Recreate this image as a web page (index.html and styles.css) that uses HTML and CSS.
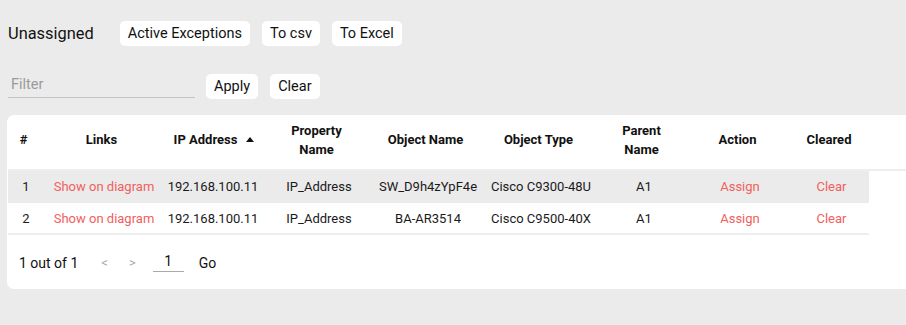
FILE: index.html
```html
<!DOCTYPE html>
<html lang="en">
<head>
<meta charset="utf-8">
<title>Unassigned</title>
<link rel="stylesheet" href="styles.css">
</head>
<body>
<div class="page">
  <div class="toolbar">
    <span class="title">Unassigned</span>
    <button class="btn">Active Exceptions</button>
    <button class="btn">To csv</button>
    <button class="btn">To Excel</button>
  </div>
  <div class="filter-row">
    <input class="filter" type="text" placeholder="Filter">
    <button class="btn">Apply</button>
    <button class="btn">Clear</button>
  </div>
  <div class="card">
    <div class="thead">
      <div class="grid">
        <div class="th">#</div>
        <div class="th">Links</div>
        <div class="th sorted">IP Address <svg class="sort" width="8" height="5" viewBox="0 0 8 5"><path d="M0 5 L4 0 L8 5 Z" fill="#111"/></svg></div>
        <div class="th">Property<br>Name</div>
        <div class="th">Object Name</div>
        <div class="th">Object Type</div>
        <div class="th">Parent<br>Name</div>
        <div class="th">Action</div>
        <div class="th">Cleared</div>
      </div>
    </div>
    <div class="grid row alt">
      <div class="td">1</div>
      <div class="td link">Show on diagram</div>
      <div class="td">192.168.100.11</div>
      <div class="td">IP_Address</div>
      <div class="td">SW_D9h4zYpF4e</div>
      <div class="td">Cisco C9300-48U</div>
      <div class="td">A1</div>
      <div class="td link">Assign</div>
      <div class="td link">Clear</div>
    </div>
    <div class="grid row last">
      <div class="td">2</div>
      <div class="td link">Show on diagram</div>
      <div class="td">192.168.100.11</div>
      <div class="td">IP_Address</div>
      <div class="td">BA-AR3514</div>
      <div class="td">Cisco C9500-40X</div>
      <div class="td">A1</div>
      <div class="td link">Assign</div>
      <div class="td link">Clear</div>
    </div>
    <div class="pager">
      <span class="count">1 out of 1</span>
      <span class="arrow">&lt;</span>
      <span class="arrow">&gt;</span>
      <input class="page-input" type="text" value="1">
      <span class="go">Go</span>
    </div>
  </div>
</div>
</body>
</html>
```
FILE: styles.css
```css
html, body {
  margin: 0;
  padding: 0;
  overflow: hidden;
}
body {
  background: #ebebeb;
  font-family: Roboto, "Liberation Sans", sans-serif;
  color: #111;
}
.page {
  padding: 21px 0 0 8px;
}
.toolbar {
  display: flex;
  align-items: center;
  gap: 12px;
  height: 25px;
}
.title {
  font-size: 16.4px;
  margin-right: 14px;
  color: #111;
}
.btn {
  font-family: Roboto, "Liberation Sans", sans-serif;
  font-size: 14.5px;
  color: #111;
  background: #fff;
  border: none;
  border-radius: 5px;
  height: 25px;
  padding: 0 8px;
  cursor: pointer;
}
.filter-row {
  display: flex;
  align-items: center;
  gap: 12px;
  margin-top: 27px;
  height: 26px;
}
.filter {
  width: 187px;
  height: 24px;
  box-sizing: border-box;
  border: none;
  border-bottom: 1px solid #c4c4c4;
  background: transparent;
  font-family: Roboto, "Liberation Sans", sans-serif;
  font-size: 14.5px;
  padding: 0 0 3px 3px;
  margin-right: -1px;
  outline: none;
}
.filter::placeholder {
  color: #9a9a9a;
}
.card {
  margin-top: 16px;
  margin-left: -1px;
  margin-right: -20px;
  background: #fff;
  border-radius: 7px;
  padding-left: 1px;
  height: 174px;
}
.grid {
  display: grid;
  grid-template-columns: 36px 120px 98px 114px 104px 122px 84px 108px 75px;
  width: 861px;
}
.thead {
  border-bottom: 2px solid #eeeeee;
  height: 54px;
}
.thead .grid {
  height: 49px;
  padding-bottom: 5px;
}
.th {
  display: flex;
  align-items: center;
  justify-content: center;
  text-align: center;
  font-size: 13px;
  font-weight: 700;
  line-height: 19px;
  color: #111;
  padding-right: 5px;
}
.th.sorted {
  padding-right: 0;
  padding-left: 2px;
}
.sort {
  margin-left: 9px;
  margin-top: 0;
}
.row {
  height: 31px;
  border-bottom: 1px solid #eeeeee;
}
.row.alt {
  background: #ebebeb;
  border-bottom-color: #ebebeb;
}
.row.last {
  height: 30px;
  border-bottom-width: 2px;
}
.td {
  display: flex;
  align-items: center;
  justify-content: center;
  font-size: 13px;
  color: #1a1a1a;
  white-space: nowrap;
}
.td.link {
  color: #f2605e;
}
.pager {
  display: flex;
  align-items: center;
  height: 55px;
  padding-left: 11px;
  font-size: 14px;
}
.count {
  margin-right: 23px;
}
.arrow {
  color: #aaa;
  font-size: 13px;
  margin-right: 21px;
}
.page-input {
  width: 31px;
  box-sizing: border-box;
  border: none;
  border-bottom: 1px solid #aaa;
  text-align: center;
  font-family: Roboto, "Liberation Sans", sans-serif;
  font-size: 14px;
  color: #111;
  padding: 0 0 2px 0;
  margin-left: -4px;
  margin-right: 15px;
  outline: none;
  background: transparent;
}
.go {
  color: #111;
}
```
